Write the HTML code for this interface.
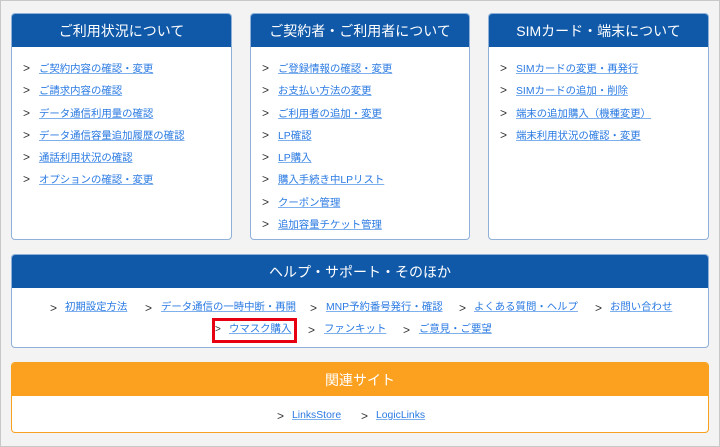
<!DOCTYPE html>
<html><head><meta charset="utf-8"><style>
*{margin:0;padding:0;box-sizing:border-box}
body{width:720px;height:447px;background:#fff;font-family:"Liberation Sans","Noto Sans CJK JP",sans-serif;position:relative;overflow:hidden}
.frame{position:absolute;left:0;top:0;width:720px;height:447px;border:1px solid #c8c8c8;background:#f3f3f3}
.box{position:absolute;background:#fff;border:1px solid #8fb0d8;border-radius:4px;overflow:hidden}
.hd{background:#1059a9;color:#fff;text-align:center;font-size:14px;height:33px;line-height:34px}
.or{border-color:#f8a020}.or .hd{background:#fba01f}
ul{list-style:none;padding:15px 0 0 11px}
li{font-size:10.4px;height:22.3px;line-height:12px;white-space:nowrap}
.g{color:#333;font-size:12px;display:inline-block;width:16px}
a{color:#2a7ae2;text-decoration:underline;text-decoration-color:#7fb0ee}
.row{position:absolute;font-size:10.4px;white-space:nowrap;line-height:12px}
.row .g{position:absolute;width:auto}
.row a{position:absolute}
</style></head><body>
<div class="frame"></div>
<div class="box" style="left:11px;top:13px;width:221px;height:227px"><div class="hd">ご利用状況について</div>
<ul><li><span class="g">&gt;</span><a>ご契約内容の確認・変更</a></li><li><span class="g">&gt;</span><a>ご請求内容の確認</a></li><li><span class="g">&gt;</span><a>データ通信利用量の確認</a></li><li><span class="g">&gt;</span><a>データ通信容量追加履歴の確認</a></li><li><span class="g">&gt;</span><a>通話利用状況の確認</a></li><li><span class="g">&gt;</span><a>オプションの確認・変更</a></li></ul></div>
<div class="box" style="left:250px;top:13px;width:220px;height:227px"><div class="hd">ご契約者・ご利用者について</div>
<ul><li><span class="g">&gt;</span><a>ご登録情報の確認・変更</a></li><li><span class="g">&gt;</span><a>お支払い方法の変更</a></li><li><span class="g">&gt;</span><a>ご利用者の追加・変更</a></li><li><span class="g">&gt;</span><a>LP確認</a></li><li><span class="g">&gt;</span><a>LP購入</a></li><li><span class="g">&gt;</span><a>購入手続き中LPリスト</a></li><li><span class="g">&gt;</span><a>クーポン管理</a></li><li><span class="g">&gt;</span><a>追加容量チケット管理</a></li></ul></div>
<div class="box" style="left:488px;top:13px;width:221px;height:227px"><div class="hd">SIMカード・端末について</div>
<ul><li><span class="g">&gt;</span><a>SIMカードの変更・再発行</a></li><li><span class="g">&gt;</span><a>SIMカードの追加・削除</a></li><li><span class="g">&gt;</span><a>端末の追加購入（機種変更）</a></li><li><span class="g">&gt;</span><a>端末利用状況の確認・変更</a></li></ul></div>
<div class="box" style="left:11px;top:254px;width:698px;height:94px"><div class="hd">ヘルプ・サポート・そのほか</div></div>
<div class="row" style="left:0;top:302px;width:720px">
<span class="g" style="left:50px">&gt;</span><a style="left:65px">初期設定方法</a>
<span class="g" style="left:145px">&gt;</span><a style="left:161px">データ通信の一時中断・再開</a>
<span class="g" style="left:310px">&gt;</span><a style="left:326px">MNP予約番号発行・確認</a>
<span class="g" style="left:459px">&gt;</span><a style="left:474px">よくある質問・ヘルプ</a>
<span class="g" style="left:595px">&gt;</span><a style="left:610px">お問い合わせ</a></div>
<div style="position:absolute;left:212px;top:318px;width:85px;height:25px;border:3px solid #e60012"></div>
<div class="row" style="left:0;top:324px;width:720px">
<span class="g" style="left:215px;font-size:10px">&gt;</span><a style="left:229px">ウマスク購入</a>
<span class="g" style="left:308px">&gt;</span><a style="left:324px">ファンキット</a>
<span class="g" style="left:403px">&gt;</span><a style="left:419px">ご意見・ご要望</a></div>
<div class="box or" style="left:11px;top:362px;width:698px;height:71px"><div class="hd">関連サイト</div></div>
<div class="row" style="left:0;top:410px;width:720px">
<span class="g" style="left:277px">&gt;</span><a style="left:292px">LinksStore</a>
<span class="g" style="left:361px">&gt;</span><a style="left:376px">LogicLinks</a></div>
</body></html>
